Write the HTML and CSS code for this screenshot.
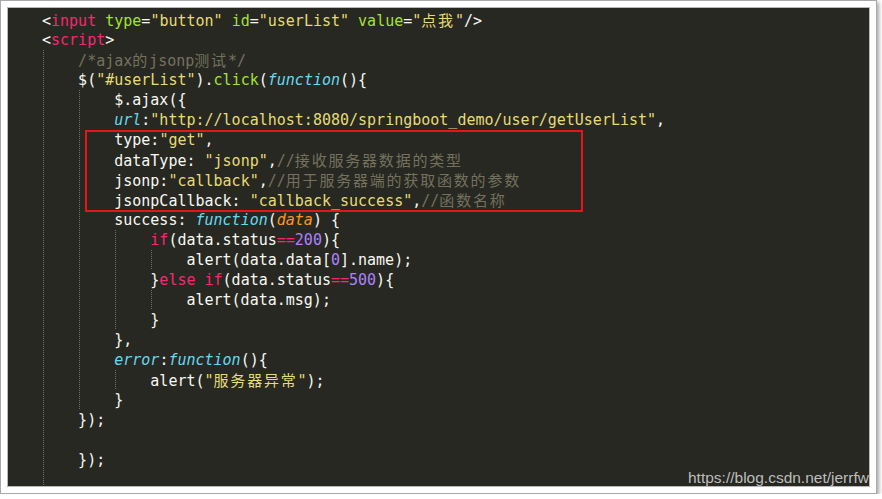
FILE: index.html
```html
<!DOCTYPE html>
<html lang="zh-CN">
<head>
<meta charset="utf-8">
<title>jsonp</title>
<link rel="stylesheet" href="styles.css">
</head>
<body>
<div class="shot">
  <div class="editor">
    <div class="code">
      <div class="ln"><span class="p">&lt;</span><span class="tag">input</span> <span class="attr">type</span>=<span class="str">"button"</span> <span class="attr">id</span>=<span class="str">"userList"</span> <span class="attr">value</span>=<span class="str">"<span class="zh">点我</span>"</span>/&gt;</div>
      <div class="ln">&lt;<span class="tag">script</span>&gt;</div>
      <div class="ln"><span class="g"></span><span class="cm">/*ajax<span class="zh">的</span>jsonp<span class="zh">测试</span>*/</span></div>
      <div class="ln"><span class="g"></span>$(<span class="str">"#userList"</span>).<span class="call">click</span>(<span class="fn">function</span>(){</div>
      <div class="ln"><span class="g"></span><span class="g"></span>$.ajax({</div>
      <div class="ln"><span class="g"></span><span class="g"></span><span class="fn">url</span>:<span class="str">"http://localhost:8080/springboot_demo/user/getUserList"</span>,</div>
      <div class="ln"><span class="g"></span><span class="g"></span>type:<span class="str">"get"</span>,</div>
      <div class="ln"><span class="g"></span><span class="g"></span>dataType: <span class="str">"jsonp"</span>,<span class="cm">//<span class="zh">接收服务器数据的类型</span></span></div>
      <div class="ln"><span class="g"></span><span class="g"></span>jsonp:<span class="str">"callback"</span>,<span class="cm">//<span class="zh">用于服务器端的获取函数的参数</span></span></div>
      <div class="ln"><span class="g"></span><span class="g"></span>jsonpCallback: <span class="str">"callback_success"</span>,<span class="cm">//<span class="zh">函数名称</span></span></div>
      <div class="ln"><span class="g"></span><span class="g"></span>success: <span class="fn">function</span>(<span class="arg">data</span>) {</div>
      <div class="ln"><span class="g"></span><span class="g"></span><span class="g"></span><span class="kw">if</span>(data.status<span class="kw">==</span><span class="num">200</span>){</div>
      <div class="ln"><span class="g"></span><span class="g"></span><span class="g"></span><span class="g"></span>alert(data.data[<span class="num">0</span>].name);</div>
      <div class="ln"><span class="g"></span><span class="g"></span><span class="g"></span>}<span class="kw">else</span> <span class="kw">if</span>(data.status<span class="kw">==</span><span class="num">500</span>){</div>
      <div class="ln"><span class="g"></span><span class="g"></span><span class="g"></span><span class="g"></span>alert(data.msg);</div>
      <div class="ln"><span class="g"></span><span class="g"></span><span class="g"></span>}</div>
      <div class="ln"><span class="g"></span><span class="g"></span>},</div>
      <div class="ln"><span class="g"></span><span class="g"></span><span class="fn">error</span>:<span class="fn">function</span>(){</div>
      <div class="ln"><span class="g"></span><span class="g"></span><span class="g"></span>alert(<span class="str">"<span class="zh">服务器异常</span>"</span>);</div>
      <div class="ln"><span class="g"></span><span class="g"></span>}</div>
      <div class="ln"><span class="g"></span>});</div>
      <div class="ln"><span class="g"></span></div>
      <div class="ln"><span class="g"></span>});</div>
      <div class="ln"><span class="g"></span></div>
    </div>
    <div class="mark"></div>
  </div>
  <div class="wm">https://blog.csdn.net/jerrfw</div>
</div>
</body>
</html>
```
FILE: styles.css
```css
* { box-sizing: border-box; }
html, body { margin: 0; padding: 0; background: #ffffff; }

.shot {
  position: relative;
  width: 877px;
  height: 494px;
  border: 1px solid #a8a8a8;
  padding: 6px;
  background: #ffffff;
  box-shadow: 2px 2px 4px rgba(0, 0, 0, 0.35);
}

.editor {
  position: relative;
  height: 100%;
  border: 1px solid #b8b8b8;
  background: #272822;
  overflow: hidden;
}

.code {
  padding: 2px 0 0 34px;
  font-family: "DejaVu Sans Mono", "Noto Sans CJK SC", monospace;
  font-size: 15px;
  color: #f8f8f2;
}

.ln {
  height: 20px;
  line-height: 20px;
  white-space: pre;
}

.g {
  display: inline-block;
  width: 4ch;
  height: 20px;
  vertical-align: top;
  background-image: linear-gradient(#6f6f6a 50%, transparent 50%);
  background-size: 1px 2px;
  background-repeat: repeat-y;
  background-position: 1px 0;
}

.zh {
  font-family: "Noto Sans CJK SC", sans-serif;
  letter-spacing: 1.8px;
}

.p { color: #f8f8f2; }
.tag { color: #f92672; }
.attr { color: #a6e22e; }
.str { color: #e6db74; }
.cm { color: #75715e; }
.fn { color: #66d9ef; font-style: italic; }
.arg { color: #fd971f; font-style: italic; }
.kw { color: #f92672; }
.num { color: #ae81ff; }
.call { color: #a6e22e; }

.mark {
  position: absolute;
  left: 77px;
  top: 122px;
  width: 498px;
  height: 82px;
  border: 2px solid #e8141c;
}

.wm {
  position: absolute;
  left: 687px;
  top: 468px;
  font-family: "Liberation Sans", Arial, sans-serif;
  font-size: 15.5px;
  line-height: 18px;
  color: rgba(205, 205, 205, 0.92);
  white-space: nowrap;
}
```
